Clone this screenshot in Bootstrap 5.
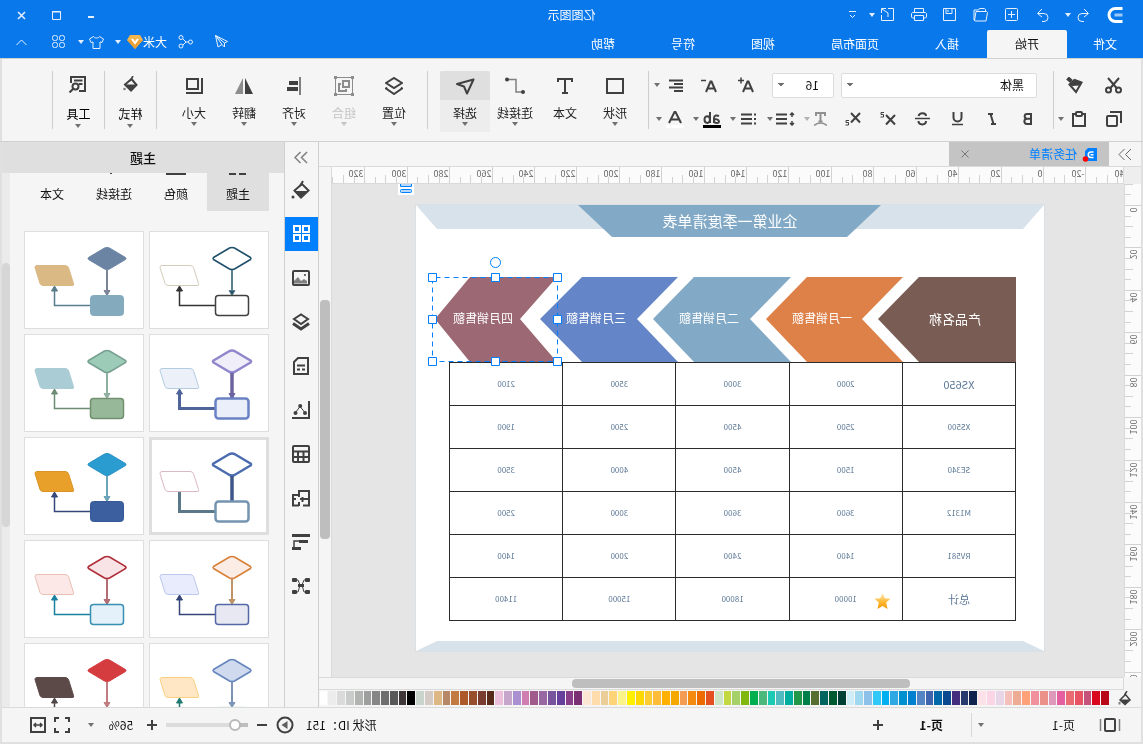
<!DOCTYPE html>
<html lang="zh-CN">
<head>
<meta charset="utf-8">
<meta name="viewport" content="width=device-width, initial-scale=1">
<title>亿图图示</title>
<link href="https://cdn.jsdelivr.net/npm/bootstrap@5.3.0/dist/css/bootstrap.min.css" rel="stylesheet">
<style>
:root { --ink:#404040; --line:#dadada; --chrome:#f5f5f5; --brand:#0978eb; --accent:#0080ff; }
body { font-family:"Noto Sans CJK SC",sans-serif; font-size:12px; line-height:16px; color:#111; background:var(--chrome); }
/* the whole window is shown as a mirror image */
.mirror { transform:scaleX(-1); min-height:100vh; }
button { background:none; border:0; padding:0; color:inherit; font-size:12px; line-height:16px; }
svg { display:block; flex:none; }
.ico { fill:none; stroke:currentColor; stroke-width:2; }
.tri { width:10px; margin-left:-5px; display:flex; justify-content:center; flex:none; }
.tri::after, .tool.drop::after { content:""; border:3px solid transparent; border-top:4px solid #707070; border-bottom:0; }
.topbar { background:var(--brand); color:#fff; }
.topbar .ico { stroke-width:1; opacity:.9; }
.topbar .tri::after { border-top-color:#e4f0ff; }
.titlerow { display:grid; grid-template-columns:1fr auto 1fr; height:30px; }
.titlerow .tri { margin-right:5px; }
.tb { width:31px; display:flex; justify-content:center; align-items:center; flex:none; }
.tb-w { width:36px; display:flex; justify-content:center; }
.tb-s { width:35px; display:flex; justify-content:center; }
.menurow { height:28px; }
.menurow a { color:#fff; text-decoration:none; white-space:nowrap; padding:0 28px; display:flex; align-items:center; height:28px; }
.menurow a.file { padding:0 26px; }
.menurow a.on { background:var(--chrome); color:#111; border-radius:2px 2px 0 0; }
.shell { border:2px solid #e0e0e0; border-top:0; }
.ribbon { height:84px; border-top:1px solid #d0d0d0; border-bottom:1px solid #d0d0d0; color:var(--ink); padding-top:12px; margin:0 -2px; }
.ib { width:35px; height:28px; display:flex; align-items:center; justify-content:center; flex:none; }
.w28 { width:28px; } .w32 { width:32px; } .w37 { width:37px; }
.rgroup { display:flex; flex-direction:column; gap:6px; flex:none; }
.g-clip { width:89px; } .g-font { width:404px; }
.sep { width:1px; height:58px; background:#cdcdcd; flex:none; }
.box { background-color:#fff; border:1px solid #dcdcdf; border-radius:2px; height:25px; font-size:12px; line-height:16px; padding:0 12px; color:#111; appearance:none;
  background-image:linear-gradient(to bottom left,#707070 50%,transparent 50%),linear-gradient(to bottom right,#707070 50%,transparent 50%); background-repeat:no-repeat; background-position:right 8px top 9px,right 5px top 9px; background-size:3px 4px; }
.box-font { width:196px; } .box-size { width:62px; margin-left:7px; padding-left:14px; }
.tool { width:50px; height:61px; display:flex; flex-direction:column; align-items:center; flex:none; }
.tool .pic { height:29px; width:100%; display:flex; align-items:center; justify-content:center; }
.tool .cap { height:21px; padding-top:5px; color:#222; margin-bottom:1px; }
.tool.on { background:#ededed; } .tool.on .pic { background:#dfdfdf; border-radius:2px 2px 0 0; }
.tool.off, .tool.off .cap { color:#c4c4c4; } .tool.off .ico { color:#8c8c8c; } .tool.off::after { border-top-color:#c4c4c4; }
.tool.wide { width:51px; }
.tool.wide .cap { color:#000; padding-top:6px; height:23px; }
.tabbar { height:25px; border-bottom:1px solid var(--line); }
.doc { width:160px; background:#c4c4c4; color:var(--accent); }
.work { display:grid; grid-template-columns:17px minmax(0,1fr) 13px; grid-template-rows:17px minmax(0,1fr) 13px; }
.rule { background:#fbfbfb; overflow:hidden; }
.rule svg { width:100%; height:100%; }
.rule text { font-size:9px; fill:#666; }
.rule-h { border-bottom:1px solid var(--line); border-left:1px solid var(--line); }
.rule-v { border-right:1px solid var(--line); }
.board { background:#e5e5e5; overflow:hidden; position:relative; padding:21px 0 0 80px; }
.paper { width:628px; height:446px; background:#fff; position:relative; outline:1px solid #dbe0e4; }
.paper > svg { position:absolute; left:0; top:0; overflow:visible; }
.paper > svg text { fill:#fff; text-anchor:middle; font-size:12px; }
.paper > svg .t15 { font-size:15px; } .paper > svg .t13 { font-size:13px; }
.grid-box { padding:157px 0 0 28px; }
.sales { width:567px; table-layout:fixed; border-collapse:collapse; font-size:8px; line-height:10px; color:#5b7896; text-align:center; border:1px solid #6a6a6a; }
.sales td, .sales th { height:43px; border:1px solid #2c2c2c; font-weight:400; padding:0; vertical-align:middle; }
.sales .big { font-size:11px; }
.chip { position:absolute; left:710px; top:0; }
.thumb { background:#bebebe; border-radius:4px; }
.vbar { border-left:1px solid var(--line); }
.vbar .thumb { width:10px; height:239px; margin:133px auto 0 1px; }
.hbar { grid-column:2 / 4; border:1px solid var(--line); border-right:0; padding-top:1px; background:var(--chrome); }
.hbar .thumb { width:338px; height:9px; margin-left:213px; }
.swatches { height:17px; padding:1px 0 2px 9px; }
.swatches i { flex:1 1 0; height:14px; }
.strip { gap:1px; }
.dock { width:35px; border:1px solid #cfcfcf; border-top:0; border-bottom:0; color:var(--ink); }
.dock button { width:33px; height:34px; display:flex; align-items:center; justify-content:center; margin-bottom:10px; }
.dock button.on { background:var(--accent); color:#fff; }
.dock button.more { height:30px; margin-bottom:1px; color:#808080; }
.side { width:282px; }
.side h2 { height:31px; background:#dfdfdf; font-size:13px; line-height:31px; text-align:center; margin:0; font-weight:500; }
.side-tabs { height:38px; padding-left:15px; }
.side-tabs button { width:62px; height:38px; color:#111; display:flex; flex-direction:column; align-items:center; overflow:hidden; }
.side-tabs button.on { background:#dfdfdf; }
.side-tabs .nub { height:2px; width:20px; margin-bottom:11px; }
.side-scroll { width:8px; background:#ebebeb; padding-top:90px; }
.side-scroll .thumb { height:264px; background:#d6d6d6; }
.themes { display:grid; grid-template-columns:120px 120px; gap:5px; padding:20px 0 0 15px; overflow:hidden; align-content:start; }
.themes button { height:98px; background:#fff; border:1px solid #dedede; overflow:hidden; }
.themes button.on { box-shadow:inset 0 0 0 2px #dedede; }
.themes svg { margin:-1px; }
.status { height:35px; border-top:1px solid #dadada; color:var(--ink); }
.status .txt { color:#111; white-space:nowrap; }
.pages { width:94px; } .zoomval { width:34px; }
.range { appearance:none; width:82px; height:14px; margin:0; background:linear-gradient(90deg,#bdbdbd 16%,#dcdcdc 16%) center/100% 4px no-repeat; }
.range::-webkit-slider-thumb { appearance:none; width:12px; height:12px; border-radius:50%; background:#fff; border:2px solid #b8b8b8; }
.vsep { width:1px; height:24px; background:#d8d8d8; }
</style>
</head>
<body>
<div class="mirror d-flex flex-column">
  <header class="topbar">
    <div class="titlerow align-items-center">
      <div class="d-flex align-items-center ps-3">
        <svg class="ms-1 me-2" width="16" height="16" viewBox="0 0 15 16" fill="none" stroke="#fff" stroke-width="3"><path d="M0 1.5h7a6 6 0 0 1 0 13H0"/><path d="M0 8h8" stroke="#9ccbfb"/></svg>
        <button class="tb" aria-label="撤销"><svg class="ico" width="13" height="14"><path d="M6 1L1.500 5.500L6 9M2 5.500H8a3.500 3.500 0 0 1 0 8H6"/></svg></button><span class="tri"></span>
        <button class="tb" aria-label="重做"><svg class="ico" width="13" height="14"><path d="M7 1l4.500 4.500L7 9M11 5.500H5a3.500 3.500 0 0 0 0 8H7"/></svg></button>
        <button class="tb" aria-label="新建"><svg class="ico" width="14" height="14"><rect x=".5" y=".5" width="12" height="12" rx="1"/><path d="M6.500 3v7M3 6.500h7"/></svg></button>
        <button class="tb" aria-label="打开"><svg class="ico" width="16" height="14"><path d="M2.500 3.500V1.500l1-1h5l1 1.500h4.500V12l-1 1H2L.5 4.500l1-1H12l1.500 9"/></svg></button>
        <button class="tb" aria-label="保存"><svg class="ico" width="14" height="14"><path d="M.5.5h12v12h-12zM4 .5v5h6v-5M8 2v2"/></svg></button>
        <button class="tb" aria-label="打印"><svg class="ico" width="17" height="14"><path d="M3.500 4V.5h9V4M3.500 10h-2l-1-1V5.500l1-1h13l1 1V9l-1 1h-2M3.500 7.500h9v5h-9z"/></svg></button>
        <button class="tb" aria-label="导出"><svg class="ico" width="14" height="14"><path d="M6 .5H.5v12h12V7M8 .5h4.500V5M12 1L6 5v4"/></svg></button><span class="tri"></span>
        <button class="w28 pe-2 d-flex justify-content-center" aria-label="自定义"><svg class="ico" width="8" height="8"><path d="M0 .5h7M1 4l2.500 2.500L6 4"/></svg></button>
      </div>
      <div>亿图图示</div>
      <div class="d-flex justify-content-end align-items-center">
        <button class="tb-s" aria-label="最小化"><svg class="ico" width="6" height="10"><path d="M0 7h6" style="stroke-width:2"/></svg></button>
        <button class="tb-s" aria-label="最大化"><svg class="ico" width="9" height="9"><path d="M.5.5h8v8h-8zM0 1h9"/></svg></button>
        <button class="tb-s me-1" aria-label="关闭"><svg class="ico" width="9" height="9"><path d="M1 1l7 7M8 1L1 8" style="stroke-width:1.500"/></svg></button>
      </div>
    </div>
    <div class="menurow d-flex">
      <nav class="d-flex me-auto">
        <a href="#" class="file">文件</a><a href="#" class="on">开始</a><a href="#">插入</a><a href="#">页面布局</a><a href="#">视图</a><a href="#">符号</a><a href="#">帮助</a>
      </nav>
      <div class="d-flex align-items-center pb-1">
        <button class="tb-w" aria-label="发送"><svg class="ico" width="14" height="14"><path d="M.5 6.500L12.500.5 10 12 6 9.500 3.500 12V8zM12.500.5L6 9.500M12.500.5L3.500 8"/></svg></button>
        <button class="tb-w" aria-label="分享"><svg class="ico" width="15" height="14"><circle cx="2.500" cy="7" r="2"/><circle cx="12" cy="2.500" r="2"/><circle cx="12" cy="11" r="2"/><path d="M4.500 7H7l3-3M7 7l3 3"/></svg></button>
        <button class="d-flex align-items-center text-nowrap pe-1">大米<svg width="16" height="14"><path d="M3 0h10l3 5-8 9-8-9z" fill="#f4b54c"/><path d="M0 5l8 9 8-9H12l-4 4-4-4z" fill="#e9a035"/><path d="M5 4l3 4 3-4" fill="none" stroke="#fff" stroke-width="2"/></svg></button><span class="tri ms-0"></span>
        <button class="w32 d-flex justify-content-center" aria-label="皮肤"><svg class="ico" width="15" height="13"><path d="M4.500.5L.5 3l1.500 3.500 2-.5v6.500h7V6l2 .5L14.500 3l-4-2.500c-1 2-5 2-6 0z"/></svg></button><span class="tri"></span>
        <button class="tb-w" aria-label="应用"><svg class="ico" width="14" height="14"><rect x=".5" y=".5" width="5" height="5" rx="2"/><rect x="7.500" y=".5" width="5" height="5" rx="2"/><rect x=".5" y="7.500" width="5" height="5" rx="2"/><rect x="7.500" y="7.500" width="5" height="5" rx="2"/></svg></button>
        <button class="tb-w me-1" aria-label="收起"><svg class="ico" width="11" height="7"><path d="M.5 6l5-5 5 5"/></svg></button>
      </div>
    </div>
  </header>

  <div class="shell d-flex flex-column flex-fill">
    <section class="ribbon d-flex">
      <div class="rgroup g-clip ps-2">
        <div class="d-flex ps-1">
          <button class="ib" aria-label="剪切"><svg class="ico" width="17" height="17"><circle cx="3.500" cy="13" r="2.500"/><circle cx="13.500" cy="13" r="2.500"/><path d="M3 1l9 10.500M14 1L5 11.500"/></svg></button>
          <button class="ib ms-1" aria-label="格式刷"><svg width="17" height="17" viewBox="0 0 17 17"><path d="M1.500 5.500L8.500 3l5 4.500L7 15z" fill="none" stroke="#404040" stroke-width="2"/><path d="M1 6L8.500 2.500l6 5-4 1.500-7.500-.5z" fill="#404040"/><path d="M11.500 4.500L15.500 1" stroke="#404040" stroke-width="4"/></svg></button>
        </div>
        <div class="d-flex ps-1">
          <button class="ib" aria-label="复制"><svg class="ico" width="17" height="17"><rect x="5" y="5" width="10" height="10" rx="1"/><path d="M1 12V1h11"/></svg></button>
          <button class="ib" aria-label="粘贴"><svg class="ico" width="15" height="17"><path d="M4 3H1v12h12V3h-3"/><rect x="4" y="1" width="6" height="4" rx="1"/></svg></button><span class="tri align-self-center"></span>
        </div>
      </div>
      <div class="sep"></div>
      <div class="rgroup g-font">
        <div class="d-flex ps-3 align-items-center">
          <select class="box box-font" aria-label="字体"><option>黑体</option></select>
          <select class="box box-size" aria-label="字号"><option>16</option></select>
          <button class="ib w37 ms-2" aria-label="增大字号"><svg class="ico" width="17" height="16"><path d="M1 15L5.500 4.500h1L11 15M3 11.500h6"/><path d="M10 3.500h6M13 .5v6" style="stroke-width:1.500"/></svg></button>
          <button class="ib w37" aria-label="减小字号"><svg class="ico" width="17" height="16"><path d="M1 15L5.500 4.500h1L11 15M3 11.500h6"/><path d="M11 3.500h5" style="stroke-width:1.500"/></svg></button>
          <button class="ib w28" aria-label="对齐方式"><svg class="ico" width="14" height="13"><path d="M0 1.500h14M0 5h9M0 8.500h14M0 12h9"/></svg></button><span class="tri ms-0"></span>
        </div>
        <div class="d-flex align-items-center ps-2">
          <button class="ib" aria-label="加粗"><svg class="ico" width="11" height="14"><path d="M2 1v11M1 2h5a2.300 2.300 0 0 1 0 4.700H2M6 6.700a2.600 2.600 0 0 1 0 5.300H1"/></svg></button>
          <button class="ib" aria-label="倾斜"><svg class="ico" width="10" height="14"><path d="M4 2h5M6.500 2L3.500 12M1 12h5"/></svg></button>
          <button class="ib" aria-label="下划线"><svg class="ico" width="11" height="14"><path d="M1.500 0v5.500a4 4 0 0 0 8 0V0"/><path d="M0 12.500h11" style="stroke-width:1.500"/></svg></button>
          <button class="ib" aria-label="删除线"><svg class="ico" width="15" height="14"><path d="M11.500 4C10.500 0 4 .5 4 4M4 9c0 4.500 7.500 4.500 7.500 0"/><path d="M0 6.500h15" style="stroke-width:1.500"/></svg></button>
          <button class="ib" aria-label="上标"><svg class="ico" width="17" height="14"><path d="M1 3l9 9.500M10 3L1 12.500"/><path d="M12 .5h3v2h-2.500v2.500H15.500" style="stroke-width:1"/></svg></button>
          <button class="ib" aria-label="下标"><svg class="ico" width="17" height="14"><path d="M1 1l9 9.500M10 1L1 10.500"/><path d="M12 8.500h3v2h-2.500v2.500H15.500" style="stroke-width:1"/></svg></button>
          <button class="ib w28" aria-label="文字弧度"><svg class="ico" width="13" height="14" style="color:#909090"><path d="M2 4V1h9v3M6.500 1v9M4.500 9.500h4"/><path d="M0 13.500c4-3 9-3 13 0" style="stroke-width:1.500"/></svg></button><span class="tri opacity-50"></span>
          <button class="ib w32" aria-label="行距"><svg class="ico" width="19" height="14"><path d="M8 2.500h11M8 7h11M8 11.500h11"/><path d="M3 1v4M1 3l2-2 2 2M3 9v4M1 11l2 2 2-2" style="stroke-width:1.500"/></svg></button><span class="tri"></span>
          <button class="ib w32" aria-label="项目符号"><svg class="ico" width="15" height="14"><path d="M0 2.500h2M4 2.500h11M0 7h2M4 7h11M0 11.500h2M4 11.500h11"/></svg></button><span class="tri"></span>
          <button class="ib w32" aria-label="突出显示"><svg class="ico" width="18" height="17"><path d="M2 5c2-1 5-1 5 2v5M7 8C1 8 1 12 4 12c2 0 3-1 3-2M11 1v11M11 9c0-5 5.500-5 5.500-.5s-5.500 4.500-5.500 0"/><path d="M0 15.500h18" stroke="#000" style="stroke-width:3"/></svg></button><span class="tri"></span>
          <button class="ib w32" aria-label="字体颜色"><svg class="ico" width="18" height="17"><path d="M3 12L8.500 1h1L15 12M5 8.500h8"/><path d="M0 15.500h18" stroke="#fff" style="stroke-width:3"/></svg></button><span class="tri"></span>
        </div>
      </div>
      <div class="sep"></div>
      <div class="d-flex ps-2 pe-2 me-1">
        <button class="tool drop"><span class="pic"><svg class="ico" width="18" height="16"><rect x="1" y="1" width="16" height="14"/></svg></span><span class="cap">形状</span></button>
        <button class="tool"><span class="pic"><svg class="ico" width="16" height="16"><path d="M1 4V1h14v3M8 1v14M5 15h6"/></svg></span><span class="cap">文本</span></button>
        <button class="tool drop"><span class="pic"><svg class="ico" width="20" height="18"><g stroke="#808080" style="stroke-width:1.500"><path d="M3 15h6V2.500h8"/></g><circle cx="2" cy="15" r="1"/><circle cx="18" cy="2.500" r="1"/></svg></span><span class="cap text-nowrap">连接线</span></button>
        <button class="tool drop on"><span class="pic"><svg class="ico" width="20" height="18"><path d="M1.500 2.500L18 7l-7 2.500L8 16.500z" stroke-linejoin="round"/></svg></span><span class="cap">选择</span></button>
      </div>
      <div class="sep"></div>
      <div class="d-flex ps-2 pe-2">
        <button class="tool drop"><span class="pic"><svg class="ico" width="18" height="18"><path d="M1 6l8-5 8 5-8 5zM2 10.500l-1 1 8 5.500 8-5.500-1-1"/></svg></span><span class="cap">位置</span></button>
        <button class="tool drop off"><span class="pic"><svg class="ico" width="20" height="20"><path d="M2 1.500h16M18.500 2v16M2 18.500h16M1.500 2v16" style="stroke-width:1"/><path d="M0 0h3v3H0zM17 0h3v3h-3zM0 17h3v3H0zM17 17h3v3h-3z" fill="currentColor" stroke="none"/><rect x="5" y="5" width="6" height="6"/><path d="M13 8h2v7H8v-2"/></svg></span><span class="cap">组合</span></button>
        <button class="tool drop"><span class="pic"><svg width="14" height="18" fill="#404040"><path d="M0 0h2v18H0z" fill="#808080"/><path d="M3 4h9v4H3zM3 10h11v4H3z"/></svg></span><span class="cap">对齐</span></button>
        <button class="tool drop"><span class="pic"><svg width="18" height="16"><path d="M8 0v16H0z" fill="#404040"/><path d="M10 0v16h8z" fill="#8c8c8c"/></svg></span><span class="cap">翻转</span></button>
        <button class="tool drop"><span class="pic"><svg class="ico" width="18" height="16"><rect x="5" y="1" width="11" height="10"/><path d="M1 0v15h16"/></svg></span><span class="cap">大小</span></button>
      </div>
      <div class="sep ms-1"></div>
      <button class="tool drop wide"><span class="pic pb-1"><svg width="15" height="16"><path d="M6.500 3L13 8.500l-6 6L1.500 9z" fill="none" stroke="#404040" stroke-width="2"/><path d="M2 8.500h10.500l-5.500 6z" fill="#404040"/><path d="M5 0l3 5" stroke="#404040" stroke-width="1.500"/><circle cx="13.500" cy="13" r="1.300" fill="#808080"/></svg></span><span class="cap">样式</span></button>
      <div class="sep"></div>
      <button class="tool drop wide"><span class="pic pb-1"><svg class="ico" width="18" height="18"><path d="M8 16H2V2h14v6M4.500 5.500H13M4.500 9H8"/><circle cx="11.500" cy="11.500" r="3"/><path d="M14 14l3.500 3.500"/></svg></span><span class="cap">工具</span></button>
      <div class="sep"></div>
    </section>

    <div class="d-flex flex-fill">
      <main class="d-flex flex-column flex-fill" style="min-width:0">
        <div class="tabbar d-flex">
          <button class="w32 d-flex justify-content-center align-items-center" aria-label="展开"><svg class="ico" width="14" height="13" style="stroke-width:1;color:#666"><path d="M1 1l5.500 5.500L1 12M7.500 1L13 6.500 7.500 12"/></svg></button>
          <div class="doc d-flex align-items-center ps-2">
            <svg class="ms-1" width="16" height="15"><path d="M0 1h9l3 3v10H0z" fill="#0080ff"/><path d="M3.500 5h2.500a2.500 2.500 0 0 1 0 5.500H3.500M3.500 7.700h3" fill="none" stroke="#fff" stroke-width="1.500"/><circle cx="11.500" cy="12" r="2.800" fill="red"/></svg>
            <a href="#" class="text-decoration-none me-auto px-1" style="color:var(--accent)">任务清单</a>
            <button class="me-2 pe-1" aria-label="关闭"><svg class="ico" width="8" height="8" style="stroke-width:1;color:#777"><path d="M.5.5l7 7M7.500.5l-7 7"/></svg></button>
          </div>
        </div>
        <div class="work flex-fill">
          <div style="background:#eee"></div>
          <div class="rule rule-h"><svg id="rh"></svg></div>
          <div class="vbar" style="grid-row:1 / 3;grid-column:3"><div class="thumb"></div></div>
          <div class="rule rule-v"><svg id="rv"></svg></div>
          <div class="board">
            <svg class="chip" width="16" height="11"><path d="M0 0h16v11H0z" fill="#fff"/><g fill="#b4d8fb" stroke="#0080ff"><path d="M2.500-3h11v5.500h-11z"/><rect x="2.500" y="5.500" width="11" height="3" rx="1"/></g></svg>
            <div class="paper">
              <div class="grid-box">
                <table class="sales">
                  <tr><th class="big" scope="row">XS650</th><td>2000</td><td>3000</td><td>3500</td><td>2100</td></tr>
                  <tr><th scope="row">XS500</th><td>2500</td><td>4500</td><td>2500</td><td>1900</td></tr>
                  <tr><th scope="row">SE340</th><td>1500</td><td>4500</td><td>4000</td><td>3500</td></tr>
                  <tr><th scope="row">M1312</th><td>3600</td><td>3600</td><td>3000</td><td>2500</td></tr>
                  <tr><th scope="row">RV581</th><td>1400</td><td>2400</td><td>2000</td><td>1400</td></tr>
                  <tr><th class="big" scope="row">总计</th><td>10000</td><td>18000</td><td>15000</td><td>11400</td></tr>
                </table>
              </div>
              <svg width="628" height="446">
                <path d="M0 0h628l-21 24H21z" fill="#d8e2eb"/>
                <path d="M163 0h303l-34 32H197z" fill="#82a9c5"/>
                <path d="M21 436h586l21 10H0z" fill="#d8e2eb"/>
                <text class="t15" x="314" y="22">企业第一季度清单表</text>
                <path d="M28 72h97l41 42-41 43H28z" fill="#795d54"/>
                <path d="M141 72h96l41 42-41 43h-96l41-43z" fill="#dd8148"/>
                <path d="M253 72h97l41 42-41 43h-97l41-43z" fill="#82a9c5"/>
                <path d="M366 72h96l42 42-42 43h-96l41-43z" fill="#6486c8"/>
                <path d="M487 72h87l35 42-35 43h-87l37-43z" fill="#9c6874"/>
                <text class="t13" x="89" y="119">产品名称</text>
                <text x="222" y="118">一月销售额</text><text x="335" y="118">二月销售额</text><text x="448" y="118">三月销售额</text><text x="561" y="118">四月销售额</text>
                <defs><linearGradient id="gold" x1="0" y1="0" x2="0" y2="1"><stop offset="0" stop-color="#fdebc0"/><stop offset=".6" stop-color="#fdb52a"/><stop offset="1" stop-color="#f39a0c"/></linearGradient></defs>
                <path d="M161.500 388l2.300 5.300 5.700.4-4.300 3.800 1.300 6.500-5-3-5 3 1.300-6.500-4.300-3.800 5.700-.4z" fill="url(#gold)"/>
                <g fill="none" stroke="#0080ff"><path d="M486.500 72.500h125v84h-125z" stroke-dasharray="5 4"/><g fill="#fff"><circle cx="548.500" cy="57.500" r="5"/>
                <path d="M482.500 68.500h8v8h-8zM544.500 68.500h8v8h-8zM607.500 68.500h8v8h-8zM482.500 110.500h8v8h-8zM607.500 110.500h8v8h-8zM482.500 152.500h8v8h-8zM544.500 152.500h8v8h-8zM607.500 152.500h8v8h-8z"/></g></g>
              </svg>
            </div>
          </div>
          <div class="hbar"><div class="thumb"></div></div>
        </div>
        <div class="swatches d-flex align-items-center">
          <svg class="me-2" width="15" height="15"><path d="M6.500 3.500L12 9l-5 4.500L2 9z" fill="none" stroke="#404040" stroke-width="1.500"/><path d="M2 8.500h10l-5 5z" fill="#404040"/><path d="M5 0l2.500 4" stroke="#404040" stroke-width="1.500"/><path d="M11.500 11h2v2.500h-2z" fill="#808080"/></svg>
          <div class="strip d-flex flex-fill" id="pal"></div>
        </div>
      </main>

      <aside class="dock">
        <button class="more" aria-label="展开面板"><svg class="ico" width="14" height="13" style="stroke-width:1.500"><path d="M1 1l5.500 5.500L1 12M7.500 1L13 6.500 7.500 12"/></svg></button>
        <button aria-label="填充"><svg width="20" height="20"><path d="M9 4l7.500 6.500-6.500 7-7.500-7z" fill="none" stroke="#404040" stroke-width="2"/><path d="M3 11h14l-7 7z" fill="#404040"/><path d="M8 1l3 5" stroke="#404040" stroke-width="2"/><circle cx="18" cy="17" r="1.500" fill="#404040"/></svg></button>
        <button class="on" aria-label="主题"><svg class="ico" width="18" height="18"><path d="M1 1h6v6H1zM10 1h6v6h-6zM1 10h6v6H1zM10 10h6v6h-6z"/></svg></button>
        <button aria-label="图片"><svg class="ico" width="18" height="16"><rect x="1" y="1" width="16" height="14" rx="1"/><path d="M3 13.500V11l3-2 3 2 3-4 4 4v2.500z" fill="#808080" stroke="none"/><circle cx="5" cy="5" r="1" fill="#404040" stroke="none"/></svg></button>
        <button aria-label="图层"><svg class="ico" width="18" height="18"><path d="M2 6l7-4.500L16 6l-7 5z"/><path d="M1 10.500L9 16l8-5.500" style="stroke-width:3"/></svg></button>
        <button aria-label="文档"><svg class="ico" width="16" height="18"><path d="M1 1h10l4 4v12H1zM4 8.500h8M4 12.500h3M9 12.500h3"/></svg></button>
        <button aria-label="图表"><svg class="ico" width="18" height="18"><path d="M1 0v17h17"/><path d="M5 11.500l5-6 4.500 6" style="stroke-width:1"/><g fill="#404040" stroke="none"><circle cx="5" cy="12" r="2"/><circle cx="9.800" cy="5" r="2"/><circle cx="14.500" cy="12" r="2"/></g></svg></button>
        <button aria-label="表格"><svg class="ico" width="18" height="18"><rect x="1" y="1" width="16" height="16" rx="1"/><path d="M1 6.500h16M1 12h16M6.500 7v10M12 7v10"/></svg></button>
        <button aria-label="平面图"><svg class="ico" width="18" height="17"><path d="M7 15.500H1V1h10v6M1 9h4M7.500 7v5M5 9h5M11 15.500h6V5h-6M11 16v-4M14 9h3"/></svg></button>
        <button aria-label="树形"><svg width="18" height="16" fill="#404040"><path d="M0 0h18v3H0zM2 6h9v3H2zM9 13h9v3H9z"/><path d="M11 7h5v6" fill="none" stroke="#404040" stroke-width="1.500"/></svg></button>
        <button aria-label="思维导图"><svg width="18" height="16" fill="#404040"><rect width="5" height="4" rx="1"/><rect y="12" width="5" height="4" rx="1"/><rect x="13" width="5" height="4" rx="1"/><rect x="13" y="12" width="5" height="4" rx="1"/><rect x="6" y="6" width="6" height="3"/><path d="M4 2h2l2 5-2 7H4M14 2h-2l-2 5 2 7h2" fill="none" stroke="#404040"/></svg></button>
      </aside>

      <section class="side d-flex flex-column">
        <h2>主题</h2>
        <div class="d-flex flex-fill" style="height:0">
          <div class="d-flex flex-column flex-fill">
            <div class="side-tabs d-flex flex-shrink-0">
              <button class="on"><span class="nub d-flex justify-content-center"><svg width="17" height="2"><path d="M0 0h7v2H0zM10 0h7v2h-7z" fill="#404040"/></svg></span>主题</button>
              <button><span class="nub"><svg width="20" height="2"><path d="M0 0h20v2H0z" fill="#404040"/></svg></span>颜色</button>
              <button><span class="nub d-flex justify-content-center"><svg width="20" height="2"><path d="M12 0h2v1h-2z" fill="#404040"/></svg></span>连接线</button>
              <button><span class="nub"></span>文本</button>
            </div>
            <div class="themes flex-fill" id="themes"></div>
          </div>
          <div class="side-scroll"><div class="thumb"></div></div>
        </div>
      </section>
    </div>

    <footer class="status d-flex align-items-center ps-3">
      <svg class="ico ms-1 me-4" width="22" height="14"><rect x="6" y="1" width="10" height="12" rx="1"/><path d="M1.500 1v12M20.500 1v12" stroke="#808080" style="stroke-width:1.500"/></svg>
      <button class="txt text-start pages">页-1</button><span class="tri me-1"></span><span class="vsep me-4"></span>
      <button class="txt fw-bold ms-1">页-1</button>
      <button class="ms-4 ps-2" aria-label="添加页"><svg class="ico ms-1" width="10" height="10"><path d="M0 5h10M5 0v10"/></svg></button>
      <span class="txt ms-auto me-2">形状 ID：151</span>
      <button aria-label="播放" class="ms-1"><svg width="18" height="18"><circle cx="9" cy="9" r="7.500" fill="none" stroke="#404040" stroke-width="2"/><path d="M6.500 5l6 4-6 4z" fill="#606060"/></svg></button>
      <button class="w28 d-flex justify-content-center" aria-label="缩小"><svg class="ico" width="10" height="10"><path d="M0 5h10"/></svg></button>
      <input class="range" type="range" min="0" max="100" value="10" aria-label="缩放">
      <button class="w28 d-flex justify-content-center" aria-label="放大"><svg class="ico" width="10" height="10"><path d="M0 5h10M5 0v10"/></svg></button>
      <button class="txt zoomval me-2">56%</button><span class="tri ms-0"></span>
      <button class="ms-3" aria-label="全屏"><svg class="ico" width="16" height="16"><path d="M1 5V1h4M11 1h4v4M15 11v4h-4M5 15H1v-4"/></svg></button>
      <button class="ms-2 me-4" aria-label="适应宽度"><svg class="ico me-1" width="16" height="16"><path d="M1 1h14v14H1z"/><path d="M4 8h8M6 6L4 8l2 2M10 6l2 2-2 2" style="stroke-width:1.500"/></svg></button>
    </footer>
  </div>
</div>

<script>
// Rulers: a labelled tick every 20 units, short ticks every 5
const STEP = 42.42;
const wide = rh.clientWidth, tall = rv.clientHeight;
let h = '', v = '';
for (let k = -8; 80 + k * STEP / 4 < wide; k++) {
  const main = k % 4 === 0, len = main ? 17 : k % 2 ? 7 : 9;
  const x = Math.round(80 + k * STEP / 4) - .5;
  h += `<path d="M${x} ${17 - len}V17" stroke="#d2d2d2"/>`;
  if (main) h += `<text x="${x + 1}" y="10">${k * 5}</text>`;
}
for (let k = -2; 22 + k * STEP / 4 < tall; k++) {
  const main = k % 4 === 0, len = main ? 17 : k % 2 ? 7 : 9;
  const y = Math.round(22 + k * STEP / 4) - .5;
  v += `<path d="M${17 - len} ${y}H17" stroke="#d2d2d2"/>`;
  if (main) v += `<text transform="translate(11 ${y + 2}) rotate(-90)" text-anchor="end">${k * 5}</text>`;
}
rh.innerHTML = h; rv.innerHTML = v;

// Colour strip
pal.innerHTML = ('b80818 d9081f c5527b e85464 ea6c72 e45f9f de98b9 ec918a f0919d ffa27a eeab94 f5bfbc e8d6e8 fbd5e6 fde1e8 10234f 263a6e 432d7c 0a4890 0068a8 3f64ae 5484c4 0080d0 0090d0 30a8e4 00b0f0 30c8f8 8ec1ea a0d8f0 d0ecf6 003f34 005a30 00655e 566f31 008048 209848 00aea0 50bcc0 1ccab4 4cb87c 00b050 80b810 a6d068 c2d840 cee6c6 e45020 ec6a00 f48a10 f49c54 f4a800 ffb000 ffbc38 fccc34 ffd800 fff000 fcf388 ffd478 ebcd98 ffdcac fce8d2 7c3074 883e88 66409a 78549c 9868a2 a05a8c d07eb2 aa90d0 c6a6ca ecc0da 582a1a 783c30 964e2c ac5828 c27a40 b68868 deb884 d4cac6 c8d4cc 000000 403838 585858 6e6e6e 868686 9e9e9e b2b4b2 cacccc dadada ececec ffffff')
  .split(' ').map(c => `<i style="background:#${c}"></i>`).join('');

// Theme previews: [diamond fill, stroke, box fill, stroke, slant fill, stroke, down line, side line, stroke width, line width, arrowheads]
const list = [
  ['#fff','#1f4f6a','#fff','#404040','#fff','#d4ccba','#587f8c','#333',1.5,1.5,1],
  ['#6c84a4','#6c84a4','#84abbd','#84abbd','#dab984','#dab984','#7c8498','#5a7c8c',1,1.5,1],
  ['#efeef9','#8f86cb','#ebeff9','#6a82c4','#ebf0f9','#b4cce0','#6c64a0','#50649c',2.5,3,1],
  ['#9ccbb8','#78a090','#98b89a','#70906f','#aaccd5','#aaccd5','#90b0a0','#6c8c74',1.5,1.5,1],
  ['#fff','#4c6cb0','#fff','#7494b0','#fff','#dcb8c4','#3f5688','#5a7888',2.5,3,0],
  ['#2a9cd0','#2890c4','#3c609f','#365894','#e8a02a','#d89424','#6ca4b8','#34487c',1,1.5,1],
  ['#fcece6','#d88038','#e8e8f2','#5468a8','#e8ecfc','#bcc8ec','#c09468','#344478',1.5,1.5,1],
  ['#f8e4e6','#b02c38','#e4f0fa','#3890b0','#fce8e6','#e8c0b4','#b46c74','#1880a0',1.5,1.5,1],
  ['#d0daee','#6484bc','#d8f0f0','#c8e4e4','#ffe6c4','#f8d080','#7c94b8','#207870',1.5,1.5,1],
  ['#d43c40','#d43c40','#e4e0e0','#dcdcdc','#5c4a48','#5c4a48','#c07c80','#504848',1,1.5,1]];
themes.innerHTML = list.map((t, i) => `<button class="${i === 4 ? 'on' : ''}" aria-label="主题 ${i + 1}"><svg width="120" height="98">
<g stroke-linejoin="round" stroke-width="${t[8]}"><path d="M34.500 17q2.500-1 5 0l16 9.500q1 1 0 2l-16 9.500q-2.500 1-5 0l-16-9.500q-1-1 0-2z" fill="${t[0]}" stroke="${t[1]}"/>
<path d="M79 34.500h28q2 0 2 2l-5 16q-1 2-3 2H71q-1 0-.5-2l5-16q1-2 3.500-2z" fill="${t[4]}" stroke="${t[5]}" stroke-width="1"/></g>
<path d="M37 39v25" stroke="${t[6]}" stroke-width="${t[9] + .5}"/><path d="M53 74.500h36.500V${t[10] ? 60 : 55}" fill="none" stroke="${t[7]}" stroke-width="${t[9]}"/>
${t[10] ? `<path d="M34 59.500h6l-3 5z" fill="${t[0] === '#fff' ? t[1] : t[6]}" stroke="${t[6]}"/><path d="M86.500 60h6l-3-5z" fill="${t[7]}" stroke="${t[7]}"/>` : ''}
<rect x="20.500" y="64.500" width="33" height="20" rx="3" fill="${t[2]}" stroke="${t[3]}" stroke-width="${t[8]}"/></svg></button>`).join('');
</script>
<script src="https://cdn.jsdelivr.net/npm/bootstrap@5.3.0/dist/js/bootstrap.bundle.min.js"></script>
</body>
</html>
